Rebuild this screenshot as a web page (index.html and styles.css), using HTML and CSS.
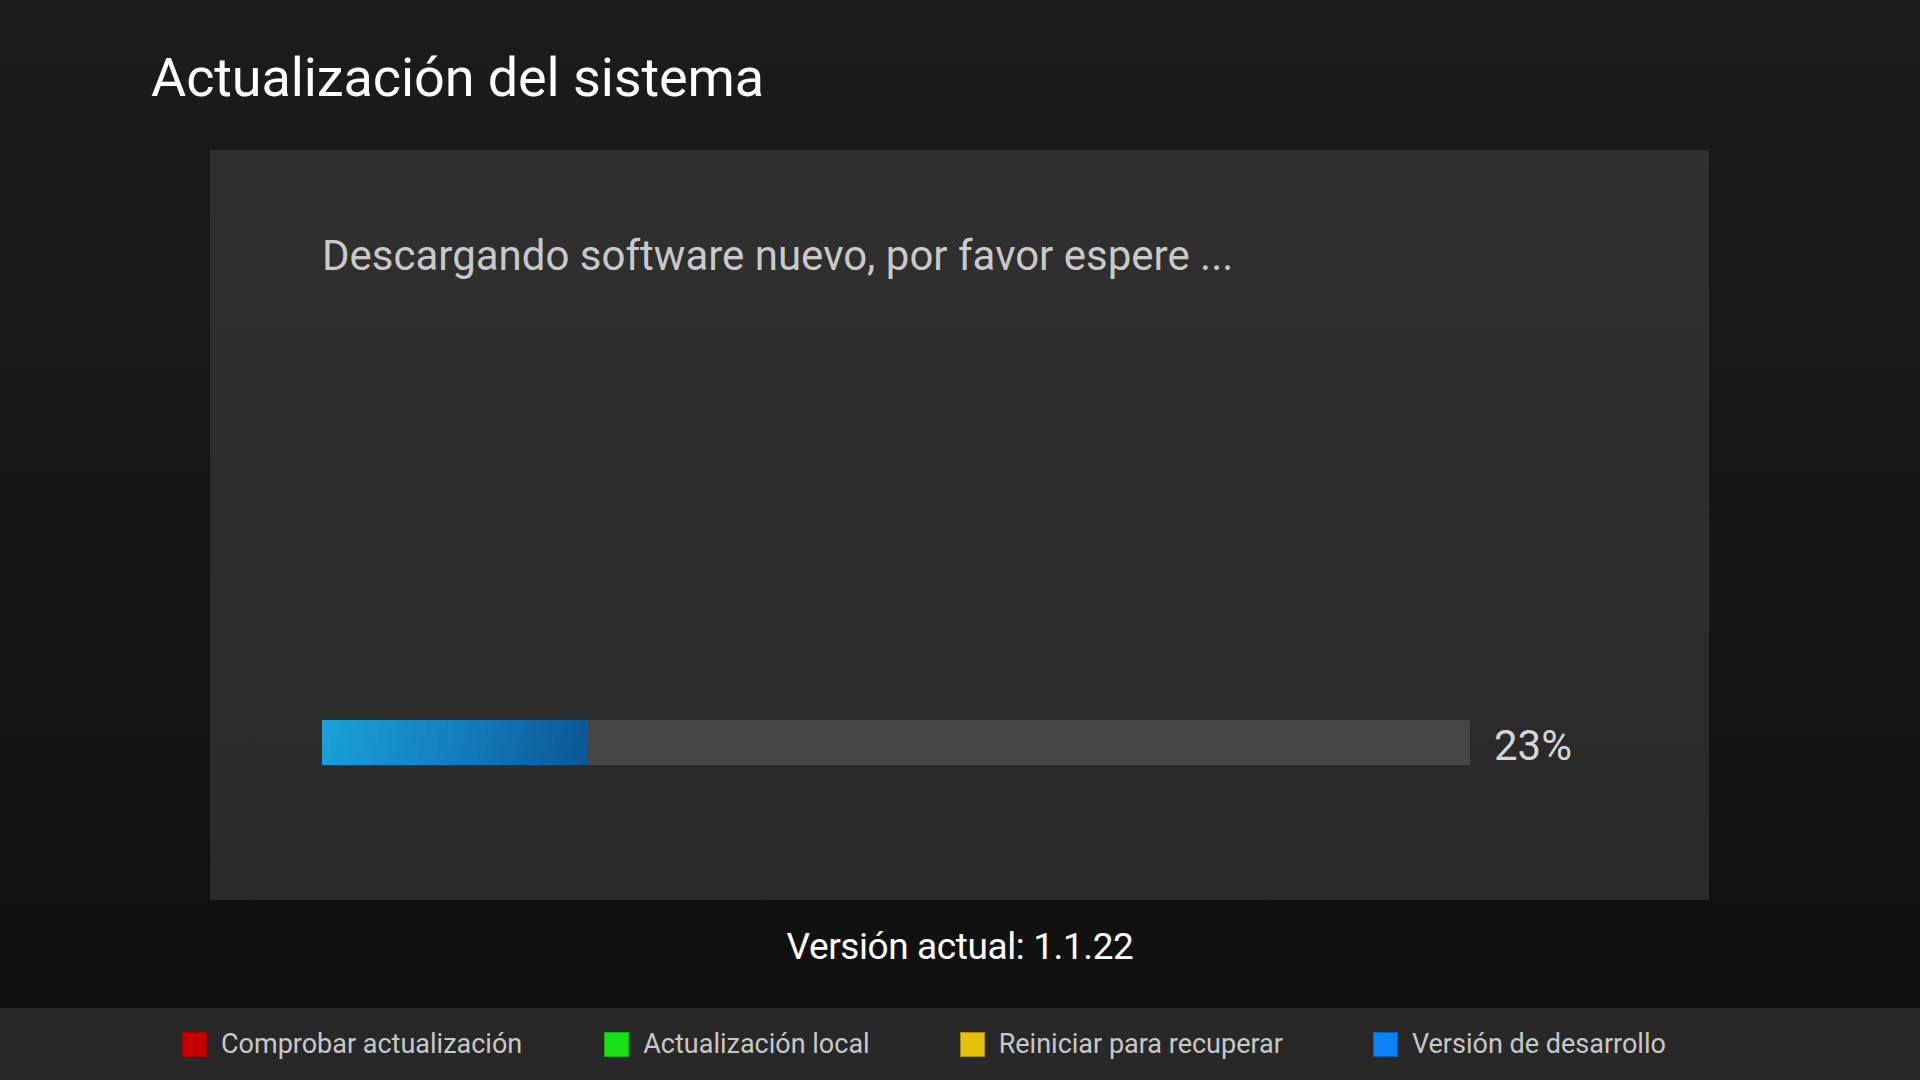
FILE: index.html
```html
<!DOCTYPE html>
<html lang="es">
<head>
<meta charset="utf-8">
<title>Actualización del sistema</title>
<link rel="stylesheet" href="styles.css">
</head>
<body>
<div class="screen">
  <h1 class="title">Actualización del sistema</h1>
  <section class="panel">
    <p class="message">Descargando software nuevo, por favor espere ...</p>
    <div class="progress-row">
      <div class="track"><div class="fill" style="width: 23.2%"></div></div>
      <span class="percent">23%</span>
    </div>
  </section>
  <p class="version">Versión actual: 1.1.22</p>
  <footer class="legend">
    <div class="item"><span class="key red"></span><span class="label">Comprobar actualización</span></div>
    <div class="item"><span class="key green"></span><span class="label">Actualización local</span></div>
    <div class="item"><span class="key yellow"></span><span class="label">Reiniciar para recuperar</span></div>
    <div class="item"><span class="key blue"></span><span class="label">Versión de desarrollo</span></div>
  </footer>
</div>
</body>
</html>
```
FILE: styles.css
```css
* { box-sizing: border-box; }
html, body {
  margin: 0;
  padding: 0;
  width: 1920px;
  height: 1080px;
  overflow: hidden;
}
body {
  font-family: Roboto, "Liberation Sans", sans-serif;
  background: linear-gradient(180deg, #1c1c1c 0%, #161616 50%, #111111 85%, #111111 100%);
  color: #ffffff;
}
.screen {
  display: flex;
  flex-direction: column;
  height: 1080px;
}
.title {
  margin: 51px 0 0 151px;
  font-size: 54px;
  letter-spacing: -0.1px;
  line-height: 1;
  font-weight: 400;
  color: #ffffff;
  height: 55px;
}
.panel {
  margin: 44px 0 0 210px;
  width: 1499px;
  height: 750px;
  background: linear-gradient(180deg, #303030 0%, #2c2c2c 60%, #2a2a2a 100%);
  display: flex;
  flex-direction: column;
  justify-content: space-between;
  padding: 85px 0 135px 112px;
}
.message {
  margin: 0;
  font-size: 42px;
  line-height: 1;
  color: #c9c9c9;
}
.progress-row {
  display: flex;
  align-items: flex-start;
  gap: 24px;
  height: 45px;
}
.track {
  width: 1148px;
  height: 45px;
  background: #464646;
}
.fill {
  height: 100%;
  background: linear-gradient(105deg, #1aa2d9 0%, #137ab9 55%, #0d5594 100%);
}
.percent {
  margin-top: 5px;
  font-size: 42px;
  line-height: 1;
  color: #d6d6d6;
}
.version {
  margin: 28px 0 0 0;
  text-align: center;
  font-size: 37px;
  letter-spacing: -0.4px;
  line-height: 1;
  color: #ffffff;
}
.legend {
  margin-top: auto;
  height: 72px;
  background: #282828;
  display: flex;
  align-items: center;
  padding-left: 182px;
}
.item {
  display: flex;
  align-items: center;
  gap: 14px;
}
.item + .item { margin-left: 90px; }
.item:nth-child(2) { margin-left: 82px; }
.key {
  width: 25px;
  height: 25px;
  display: block;
}
.red { background: #c60000; box-shadow: inset 0 0 0 1px #a00000; }
.green { background: #18e018; box-shadow: inset 0 0 0 1px #10b010; }
.yellow { background: #e5c109; box-shadow: inset 0 0 0 1px #a88a05; }
.blue { background: #0a84f4; box-shadow: inset 0 0 0 1px #0a60b0; }
.label {
  font-size: 27px;
  line-height: 1;
  color: #c8c8c8;
}
```
